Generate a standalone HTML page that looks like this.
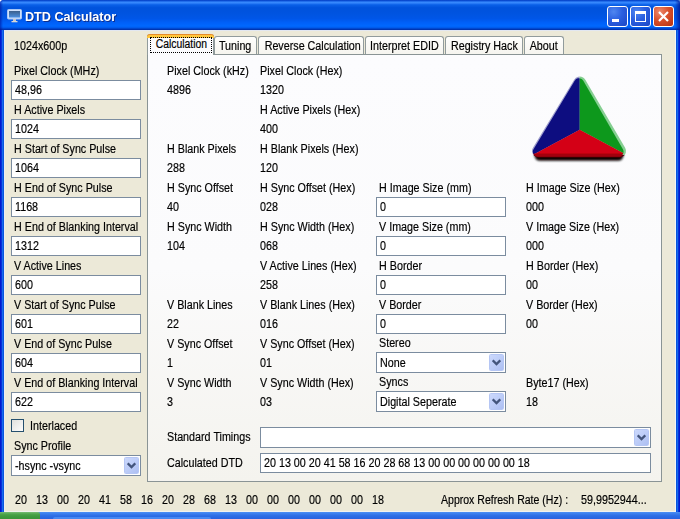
<!DOCTYPE html>
<html><head><meta charset="utf-8"><title>DTD Calculator</title>
<style>
*{box-sizing:border-box;margin:0;padding:0}
html,body{width:680px;height:519px;overflow:hidden;background:#fff}
body{font-family:"Liberation Sans",sans-serif;font-size:12px;color:#000;position:relative;letter-spacing:0px}
.task{position:absolute;left:0;top:512px;width:680px;height:7px;background:linear-gradient(#4d90f4 0,#3a7eee 25%,#2d6de4 55%,#2863e0 100%)}
.task .start{position:absolute;left:0;top:0;width:40px;height:7px;background:linear-gradient(#79bd74 0,#4da54b 30%,#3f9a3e 60%,#3a943a 100%);border-radius:0 2px 0 0}
.task .tbtn{position:absolute;left:53px;top:5px;width:158px;height:2px;background:#4688f2;border-radius:2px 2px 0 0}
.win{position:absolute;left:0;top:0;width:680px;height:512px;background:linear-gradient(to right,#0019cf 0,#0019cf 1px,#0831d9 1px,#0831d9 2px,#166aee 2px,#166aee 3px,#0855dd 3px,#0855dd 677px,#166aee 677px,#166aee 678px,#0831d9 678px,#0831d9 679px,#0019cf 679px);border-radius:4px 4px 0 0;overflow:hidden}
.title{position:absolute;left:0;top:0;width:680px;height:30px;background:linear-gradient(to bottom,#0842c4 0%,#0a50d8 3%,#3a8cff 7%,#2c7ef8 11%,#0a60e8 16%,#0052dc 26%,#0054e0 45%,#0056e8 62%,#0060f8 75%,#0068ff 87%,#0058e8 93%,#0038b8 97%,#0030a8 100%)}
.title .txt{position:absolute;left:25.4px;top:9px;font-weight:bold;font-size:13.5px;line-height:16px;color:#fff;text-shadow:1px 1px 0 #0f2f8c;white-space:nowrap;letter-spacing:0}
.title .txt .t{transform:scaleX(0.935);-webkit-text-stroke:0}
.wb{position:absolute;top:6px;width:21px;height:21px;border:1px solid #fff;border-radius:3px;background:radial-gradient(circle at 30% 25%,#4f86f0 0%,#2a5fe0 45%,#1c46c4 100%)}
.wb.x{background:radial-gradient(circle at 30% 25%,#ec8a6e 0%,#d9502c 45%,#b5300f 100%)}
.body{position:absolute;left:4px;top:30px;width:672px;height:482px;background:#ece9d8;border-top:1px solid #e2e7f1;border-left:1px solid #e9ecf4;border-right:1px solid #f3f5f8;border-bottom:1px solid #f1f2ee}
.t{display:inline-block;transform:scaleX(0.895);transform-origin:0 0;white-space:nowrap;-webkit-text-stroke:0.18px #000}
.tab .t{transform-origin:50% 0}
.l{position:absolute;white-space:nowrap;line-height:13px;height:13px}
.tb{position:absolute;height:20px;width:130px;border:1px solid #7b8c9f;background:#fff;line-height:13px;padding:3px 0 0 3px;white-space:nowrap;overflow:hidden}
.cb{position:absolute;height:21px;border:1px solid #7b8c9f;background:#fff;line-height:13px;padding:4px 0 0 3px;white-space:nowrap}
.cb .btn{position:absolute;right:1px;top:1px;width:15px;height:17px;border-radius:1.5px;background:linear-gradient(135deg,#cbd8fc 0%,#bdcdf8 50%,#adbff2 100%);border:1px solid #b5c6f4}
.cb .btn svg{position:absolute;left:2px;top:4px}
.tab{position:absolute;top:36px;height:19px;border:1px solid #919b9c;border-bottom:none;border-radius:3px 3px 0 0;background:linear-gradient(#fefefd,#f5f4ee);text-align:center;line-height:13px;padding-top:3px;white-space:nowrap}
.tab.sel{top:34px;height:21px;background:#fcfcfe;border-top:none;padding-top:4px;z-index:3}
.tab.sel:before{content:"";position:absolute;left:-1px;right:-1px;top:0;height:3px;background:#ffc73c;border-top:1px solid #e68b2c;border-radius:3px 3px 0 0}
.tab.sel:after{content:"";position:absolute;left:2px;right:1px;top:3px;bottom:2px;border:1px dotted #000}
.pane{position:absolute;left:147px;top:54px;width:515px;height:428px;border:1px solid #8a9495;background:linear-gradient(#fcfcfe 0%,#fbfbfc 50%,#f4f3ee 100%)}
.chk{position:absolute;left:11px;top:419px;width:13px;height:13px;border:1px solid #25506e;background:linear-gradient(135deg,#dfe0dc,#fdfdfc)}
</style></head><body>
<div style="position:absolute;right:0;top:0;width:6px;height:6px;background:#5a86c8"></div>
<div class="task"><div class="start"></div><div class="tbtn"></div></div>
<div class="win">
 <div class="title">
  <svg style="position:absolute;left:7px;top:9px" width="15" height="14" viewBox="0 0 15 14"><rect x="0.5" y="0.5" width="14" height="9.5" rx="1" fill="#cfe0fb" stroke="#a9c7f6"/><defs><linearGradient id="sg" x1="0" y1="0" x2="0" y2="1"><stop offset="0" stop-color="#3c5f8c"/><stop offset="1" stop-color="#4a8fe0"/></linearGradient></defs><rect x="2" y="2" width="11" height="6.5" fill="url(#sg)"/><rect x="6" y="10" width="3" height="2" fill="#c9c9c9"/><rect x="4.5" y="12" width="6" height="1.3" fill="#d8d8d8"/></svg>
  <div style="position:absolute;right:0;top:0;width:5px;height:30px;background:linear-gradient(to right,rgba(0,20,150,0),rgba(0,16,140,.75))"></div>
  <div style="position:absolute;left:0;top:0;width:3px;height:30px;background:linear-gradient(to left,rgba(0,20,150,0),rgba(0,16,150,.6))"></div>
  <div class="txt"><span class="t">DTD Calculator</span></div>
  <div class="wb" style="left:607px"><svg width="19" height="19"><rect x="4" y="12" width="7" height="3" fill="#fff"/></svg></div>
  <div class="wb" style="left:630px"><svg width="19" height="19"><rect x="4.5" y="5.5" width="10" height="9" fill="none" stroke="#fff"/><rect x="4" y="4" width="11" height="3" fill="#fff"/></svg></div>
  <div class="wb x" style="left:653px"><svg width="19" height="19"><path d="M5 5 L14 14 M14 5 L5 14" stroke="#fff" stroke-width="2.2"/></svg></div>
 </div>
 <div class="body"></div>
 <div class="l" style="left:14px;top:40px"><span class="t">1024x600p</span></div>
<div class="l" style="left:14px;top:65px"><span class="t">Pixel Clock (MHz)</span></div>
<div class="tb" style="left:11px;top:80px;width:130px"><span class="t">48,96</span></div>
<div class="l" style="left:14px;top:104px"><span class="t">H Active Pixels</span></div>
<div class="tb" style="left:11px;top:119px;width:130px"><span class="t">1024</span></div>
<div class="l" style="left:14px;top:143px"><span class="t">H Start of Sync Pulse</span></div>
<div class="tb" style="left:11px;top:158px;width:130px"><span class="t">1064</span></div>
<div class="l" style="left:14px;top:182px"><span class="t">H End of Sync Pulse</span></div>
<div class="tb" style="left:11px;top:197px;width:130px"><span class="t">1168</span></div>
<div class="l" style="left:14px;top:221px"><span class="t">H End of Blanking Interval</span></div>
<div class="tb" style="left:11px;top:236px;width:130px"><span class="t">1312</span></div>
<div class="l" style="left:14px;top:260px"><span class="t">V Active Lines</span></div>
<div class="tb" style="left:11px;top:275px;width:130px"><span class="t">600</span></div>
<div class="l" style="left:14px;top:299px"><span class="t">V Start of Sync Pulse</span></div>
<div class="tb" style="left:11px;top:314px;width:130px"><span class="t">601</span></div>
<div class="l" style="left:14px;top:338px"><span class="t">V End of Sync Pulse</span></div>
<div class="tb" style="left:11px;top:353px;width:130px"><span class="t">604</span></div>
<div class="l" style="left:14px;top:377px"><span class="t">V End of Blanking Interval</span></div>
<div class="tb" style="left:11px;top:392px;width:130px"><span class="t">622</span></div>
<div class="chk"></div>
<div class="l" style="left:30px;top:420px"><span class="t">Interlaced</span></div>
<div class="l" style="left:14px;top:440px"><span class="t">Sync Profile</span></div>
<div class="cb" style="left:11px;top:455px;width:130px"><span class="t">-hsync -vsync</span><div class="btn"><svg width="9" height="7" viewBox="0 0 9 7"><path d="M0.7 1.3 L4.5 5.1 L8.3 1.3" fill="none" stroke="#43557c" stroke-width="2.3"/></svg></div></div>
<div class="tab sel" style="left:147px;width:67px"><span class="t" style="transform:scaleX(0.865) translateX(0.8px)">Calculation</span></div>
<div class="tab" style="left:214px;width:43px"><span class="t">Tuning</span></div>
<div class="tab" style="left:258px;width:106px"><span class="t">Reverse Calculation</span></div>
<div class="tab" style="left:365px;width:79px"><span class="t">Interpret EDID</span></div>
<div class="tab" style="left:445px;width:78px"><span class="t">Registry Hack</span></div>
<div class="tab" style="left:524px;width:40px"><span class="t">About</span></div>
<div class="pane"></div>
<div class="l" style="left:167px;top:65px"><span class="t">Pixel Clock (kHz)</span></div>
<div class="l" style="left:260px;top:65px"><span class="t">Pixel Clock (Hex)</span></div>
<div class="l" style="left:167px;top:84px"><span class="t">4896</span></div>
<div class="l" style="left:260px;top:84px"><span class="t">1320</span></div>
<div class="l" style="left:260px;top:104px"><span class="t">H Active Pixels (Hex)</span></div>
<div class="l" style="left:260px;top:123px"><span class="t">400</span></div>
<div class="l" style="left:167px;top:143px"><span class="t">H Blank Pixels</span></div>
<div class="l" style="left:260px;top:143px"><span class="t">H Blank Pixels (Hex)</span></div>
<div class="l" style="left:167px;top:162px"><span class="t">288</span></div>
<div class="l" style="left:260px;top:162px"><span class="t">120</span></div>
<div class="l" style="left:167px;top:182px"><span class="t">H Sync Offset</span></div>
<div class="l" style="left:260px;top:182px"><span class="t">H Sync Offset (Hex)</span></div>
<div class="l" style="left:379px;top:182px"><span class="t">H Image Size (mm)</span></div>
<div class="l" style="left:526px;top:182px"><span class="t">H Image Size (Hex)</span></div>
<div class="l" style="left:167px;top:201px"><span class="t">40</span></div>
<div class="l" style="left:260px;top:201px"><span class="t">028</span></div>
<div class="tb" style="left:376px;top:197px;width:130px"><span class="t">0</span></div>
<div class="l" style="left:526px;top:201px"><span class="t">000</span></div>
<div class="l" style="left:167px;top:221px"><span class="t">H Sync Width</span></div>
<div class="l" style="left:260px;top:221px"><span class="t">H Sync Width (Hex)</span></div>
<div class="l" style="left:379px;top:221px"><span class="t">V Image Size (mm)</span></div>
<div class="l" style="left:526px;top:221px"><span class="t">V Image Size (Hex)</span></div>
<div class="l" style="left:167px;top:240px"><span class="t">104</span></div>
<div class="l" style="left:260px;top:240px"><span class="t">068</span></div>
<div class="tb" style="left:376px;top:236px;width:130px"><span class="t">0</span></div>
<div class="l" style="left:526px;top:240px"><span class="t">000</span></div>
<div class="l" style="left:260px;top:260px"><span class="t">V Active Lines (Hex)</span></div>
<div class="l" style="left:379px;top:260px"><span class="t">H Border</span></div>
<div class="l" style="left:526px;top:260px"><span class="t">H Border (Hex)</span></div>
<div class="l" style="left:260px;top:279px"><span class="t">258</span></div>
<div class="tb" style="left:376px;top:275px;width:130px"><span class="t">0</span></div>
<div class="l" style="left:526px;top:279px"><span class="t">00</span></div>
<div class="l" style="left:167px;top:299px"><span class="t">V Blank Lines</span></div>
<div class="l" style="left:260px;top:299px"><span class="t">V Blank Lines (Hex)</span></div>
<div class="l" style="left:379px;top:299px"><span class="t">V Border</span></div>
<div class="l" style="left:526px;top:299px"><span class="t">V Border (Hex)</span></div>
<div class="l" style="left:167px;top:318px"><span class="t">22</span></div>
<div class="l" style="left:260px;top:318px"><span class="t">016</span></div>
<div class="tb" style="left:376px;top:314px;width:130px"><span class="t">0</span></div>
<div class="l" style="left:526px;top:318px"><span class="t">00</span></div>
<div class="l" style="left:167px;top:338px"><span class="t">V Sync Offset</span></div>
<div class="l" style="left:260px;top:338px"><span class="t">V Sync Offset (Hex)</span></div>
<div class="l" style="left:379px;top:337px"><span class="t">Stereo</span></div>
<div class="l" style="left:167px;top:357px"><span class="t">1</span></div>
<div class="l" style="left:260px;top:357px"><span class="t">01</span></div>
<div class="cb" style="left:376px;top:352px;width:130px"><span class="t">None</span><div class="btn"><svg width="9" height="7" viewBox="0 0 9 7"><path d="M0.7 1.3 L4.5 5.1 L8.3 1.3" fill="none" stroke="#43557c" stroke-width="2.3"/></svg></div></div>
<div class="l" style="left:167px;top:377px"><span class="t">V Sync Width</span></div>
<div class="l" style="left:260px;top:377px"><span class="t">V Sync Width (Hex)</span></div>
<div class="l" style="left:379px;top:376px"><span class="t">Syncs</span></div>
<div class="l" style="left:526px;top:377px"><span class="t">Byte17 (Hex)</span></div>
<div class="l" style="left:167px;top:396px"><span class="t">3</span></div>
<div class="l" style="left:260px;top:396px"><span class="t">03</span></div>
<div class="cb" style="left:376px;top:391px;width:130px"><span class="t">Digital Seperate</span><div class="btn"><svg width="9" height="7" viewBox="0 0 9 7"><path d="M0.7 1.3 L4.5 5.1 L8.3 1.3" fill="none" stroke="#43557c" stroke-width="2.3"/></svg></div></div>
<div class="l" style="left:526px;top:396px"><span class="t">18</span></div>
<div class="l" style="left:167px;top:431px"><span class="t">Standard Timings</span></div>
<div class="cb" style="left:260px;top:427px;width:391px"><div class="btn"><svg width="9" height="7" viewBox="0 0 9 7"><path d="M0.7 1.3 L4.5 5.1 L8.3 1.3" fill="none" stroke="#43557c" stroke-width="2.3"/></svg></div></div>
<div class="l" style="left:167px;top:457px"><span class="t">Calculated DTD</span></div>
<div class="tb" style="left:260px;top:453px;width:391px"><span class="t">20 13 00 20 41 58 16 20 28 68 13 00 00 00 00 00 00 18</span></div>
<div class="l" style="left:15px;top:494px"><span class="t">20</span></div>
<div class="l" style="left:36px;top:494px"><span class="t">13</span></div>
<div class="l" style="left:57px;top:494px"><span class="t">00</span></div>
<div class="l" style="left:78px;top:494px"><span class="t">20</span></div>
<div class="l" style="left:99px;top:494px"><span class="t">41</span></div>
<div class="l" style="left:120px;top:494px"><span class="t">58</span></div>
<div class="l" style="left:141px;top:494px"><span class="t">16</span></div>
<div class="l" style="left:162px;top:494px"><span class="t">20</span></div>
<div class="l" style="left:183px;top:494px"><span class="t">28</span></div>
<div class="l" style="left:204px;top:494px"><span class="t">68</span></div>
<div class="l" style="left:225px;top:494px"><span class="t">13</span></div>
<div class="l" style="left:246px;top:494px"><span class="t">00</span></div>
<div class="l" style="left:267px;top:494px"><span class="t">00</span></div>
<div class="l" style="left:288px;top:494px"><span class="t">00</span></div>
<div class="l" style="left:309px;top:494px"><span class="t">00</span></div>
<div class="l" style="left:330px;top:494px"><span class="t">00</span></div>
<div class="l" style="left:351px;top:494px"><span class="t">00</span></div>
<div class="l" style="left:372px;top:494px"><span class="t">18</span></div>
<div class="l" style="left:441px;top:494px"><span class="t" style="transform:scaleX(0.878)">Approx Refresh Rate (Hz) :</span></div>
<div class="l" style="left:581px;top:494px"><span class="t">59,9952944...</span></div>
 <svg style="position:absolute;left:524px;top:68px" width="112" height="100" viewBox="524 68 112 100">
  <defs>
   <filter id="b1" filterUnits="userSpaceOnUse" x="524" y="68" width="112" height="100"><feGaussianBlur stdDeviation="0.75"/></filter>
   <filter id="b2" filterUnits="userSpaceOnUse" x="524" y="68" width="112" height="100"><feGaussianBlur stdDeviation="0.8"/></filter>
   <mask id="tm" maskUnits="userSpaceOnUse" x="524" y="68" width="112" height="100"><path d="M579.7 83 L619.5 151 L538.5 151Z" fill="#fff" stroke="#fff" stroke-width="13" stroke-linejoin="round"/></mask>
   <mask id="tm2" maskUnits="userSpaceOnUse" x="524" y="68" width="112" height="100"><path d="M579 83.2 L618.6 151.8 L537.8 151.8Z" fill="#fff" stroke="#fff" stroke-width="10" stroke-linejoin="round"/></mask>
  </defs>
  <path d="M540 155.3 L618 155.3" stroke="#0c0406" stroke-width="11" stroke-linecap="round" filter="url(#b2)"/>
  <g filter="url(#b1)">
   <g mask="url(#tm)">
    <rect x="524" y="68" width="55.7" height="100" fill="#9d9dcc"/>
    <rect x="579.7" y="68" width="57" height="100" fill="#86cf92"/>
    <rect x="524" y="155" width="112" height="14" fill="#5a000c"/>
   </g>
   <g mask="url(#tm2)">
    <path d="M579.7 60 L579.7 129.8 L515.4 164.2 L515 60Z" fill="#0b0b80"/>
    <path d="M579.7 60 L579.7 129.8 L643.8 164.2 L644 60Z" fill="#10981f"/>
    <path d="M579.7 129.8 L515.4 164.2 L643.8 164.2Z" fill="#d40012"/>
    <rect x="524" y="153.6" width="112" height="5" fill="#a30011"/>
   </g>
  </g>
 </svg>
</div>
</body></html>
